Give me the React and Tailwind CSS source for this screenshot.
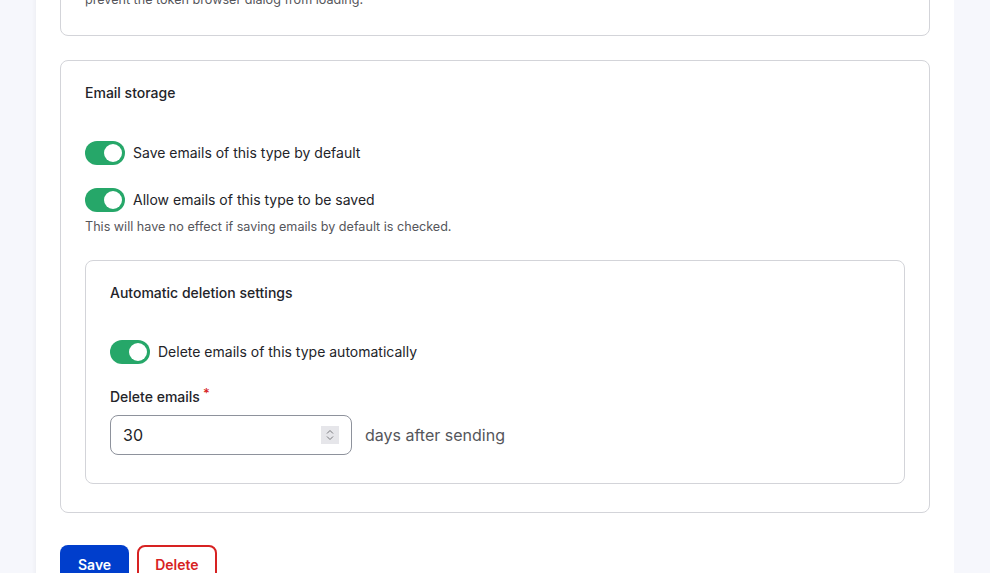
import React from "react"

function Toggle(){
  return(
    <span className="relative inline-flex h-6 w-10 shrink-0 items-center rounded-full bg-[#26a769]">
      <span className="absolute right-[3px] h-[18px] w-[18px] rounded-full bg-white"></span>
    </span>
  )
}

function ToggleRow({label}){
  return(
    <div className="flex items-center gap-2">
      <Toggle/>
      <span className="text-sm leading-5 text-[#232429]">{label}</span>
    </div>
  )
}

export default function App(){
  return(
    <div className="min-h-screen overflow-hidden bg-[#f6f7fc]" style={{fontFamily:'Inter, "Noto Sans", sans-serif'}}>
      <div className="ml-[36px] min-h-screen w-[918px] bg-white px-6 pb-10 shadow-[-2px_0_4px_rgba(0,0,0,0.03)]">

        {/* previous card, cut off at the top */}
        <div className="mt-[-52px] rounded-lg border border-[#d3d4d9] px-6 pb-[26px] pt-6">
          <p className="text-[12.6px] leading-[18px] text-[#55565b]">Some browsers will have performance issues when tokens are shown, long token lists may<br/>prevent the token browser dialog from loading.</p>
        </div>

        {/* email storage */}
        <div className="mt-6 rounded-lg border border-[#d3d4d9] px-6 pb-[28px] pt-[22px]">
          <h3 className="text-sm font-medium leading-5 text-[#232429]">Email storage</h3>
          <div className="mt-[38px]">
            <ToggleRow label="Save emails of this type by default"/>
          </div>
          <div className="mt-[23px]">
            <ToggleRow label="Allow emails of this type to be saved"/>
            <p className="mt-1.5 text-[12.6px] leading-[18px] text-[#55565b]">This will have no effect if saving emails by default is checked.</p>
          </div>

          <div className="mt-6 rounded-lg border border-[#d3d4d9] px-6 pb-[28px] pt-[22px]">
            <h3 className="text-sm font-medium leading-5 text-[#232429]">Automatic deletion settings</h3>
            <div className="mt-[37px]">
              <ToggleRow label="Delete emails of this type automatically"/>
            </div>
            <div className="mt-[23px]">
              <label className="flex items-start text-sm font-medium leading-5 text-[#232429]">
                Delete emails<span className="ml-[3px] text-[13px] leading-3 text-[#d72222]">*</span>
              </label>
              <div className="mt-2 flex items-center gap-[13px]">
                <div className="flex h-10 w-[242px] items-center justify-between rounded-lg border border-[#8e929c] pl-3 pr-3">
                  <span className="text-base text-[#232429]">30</span>
                  <span className="flex h-[18px] w-[18px] flex-col items-center justify-center bg-[#e6e6ea]">
                    <svg width="8" height="12" viewBox="0 0 8 12" fill="none" stroke="#77787c" strokeWidth="1">
                      <path d="M1 4.5 L4 1.5 L7 4.5"/>
                      <path d="M1 7.5 L4 10.5 L7 7.5"/>
                    </svg>
                  </span>
                </div>
                <span className="text-base text-[#55565b]">days after sending</span>
              </div>
            </div>
          </div>
        </div>

        <div className="mt-8 flex gap-2">
          <button className="h-[38px] rounded-lg bg-[#003ecc] px-[18px] pt-[2px] text-sm font-semibold text-white">Save</button>
          <button className="h-[38px] rounded-lg border-2 border-[#d72222] px-4 pt-[2px] text-sm font-semibold text-[#d72222]">Delete</button>
        </div>
      </div>
    </div>
  )
}
